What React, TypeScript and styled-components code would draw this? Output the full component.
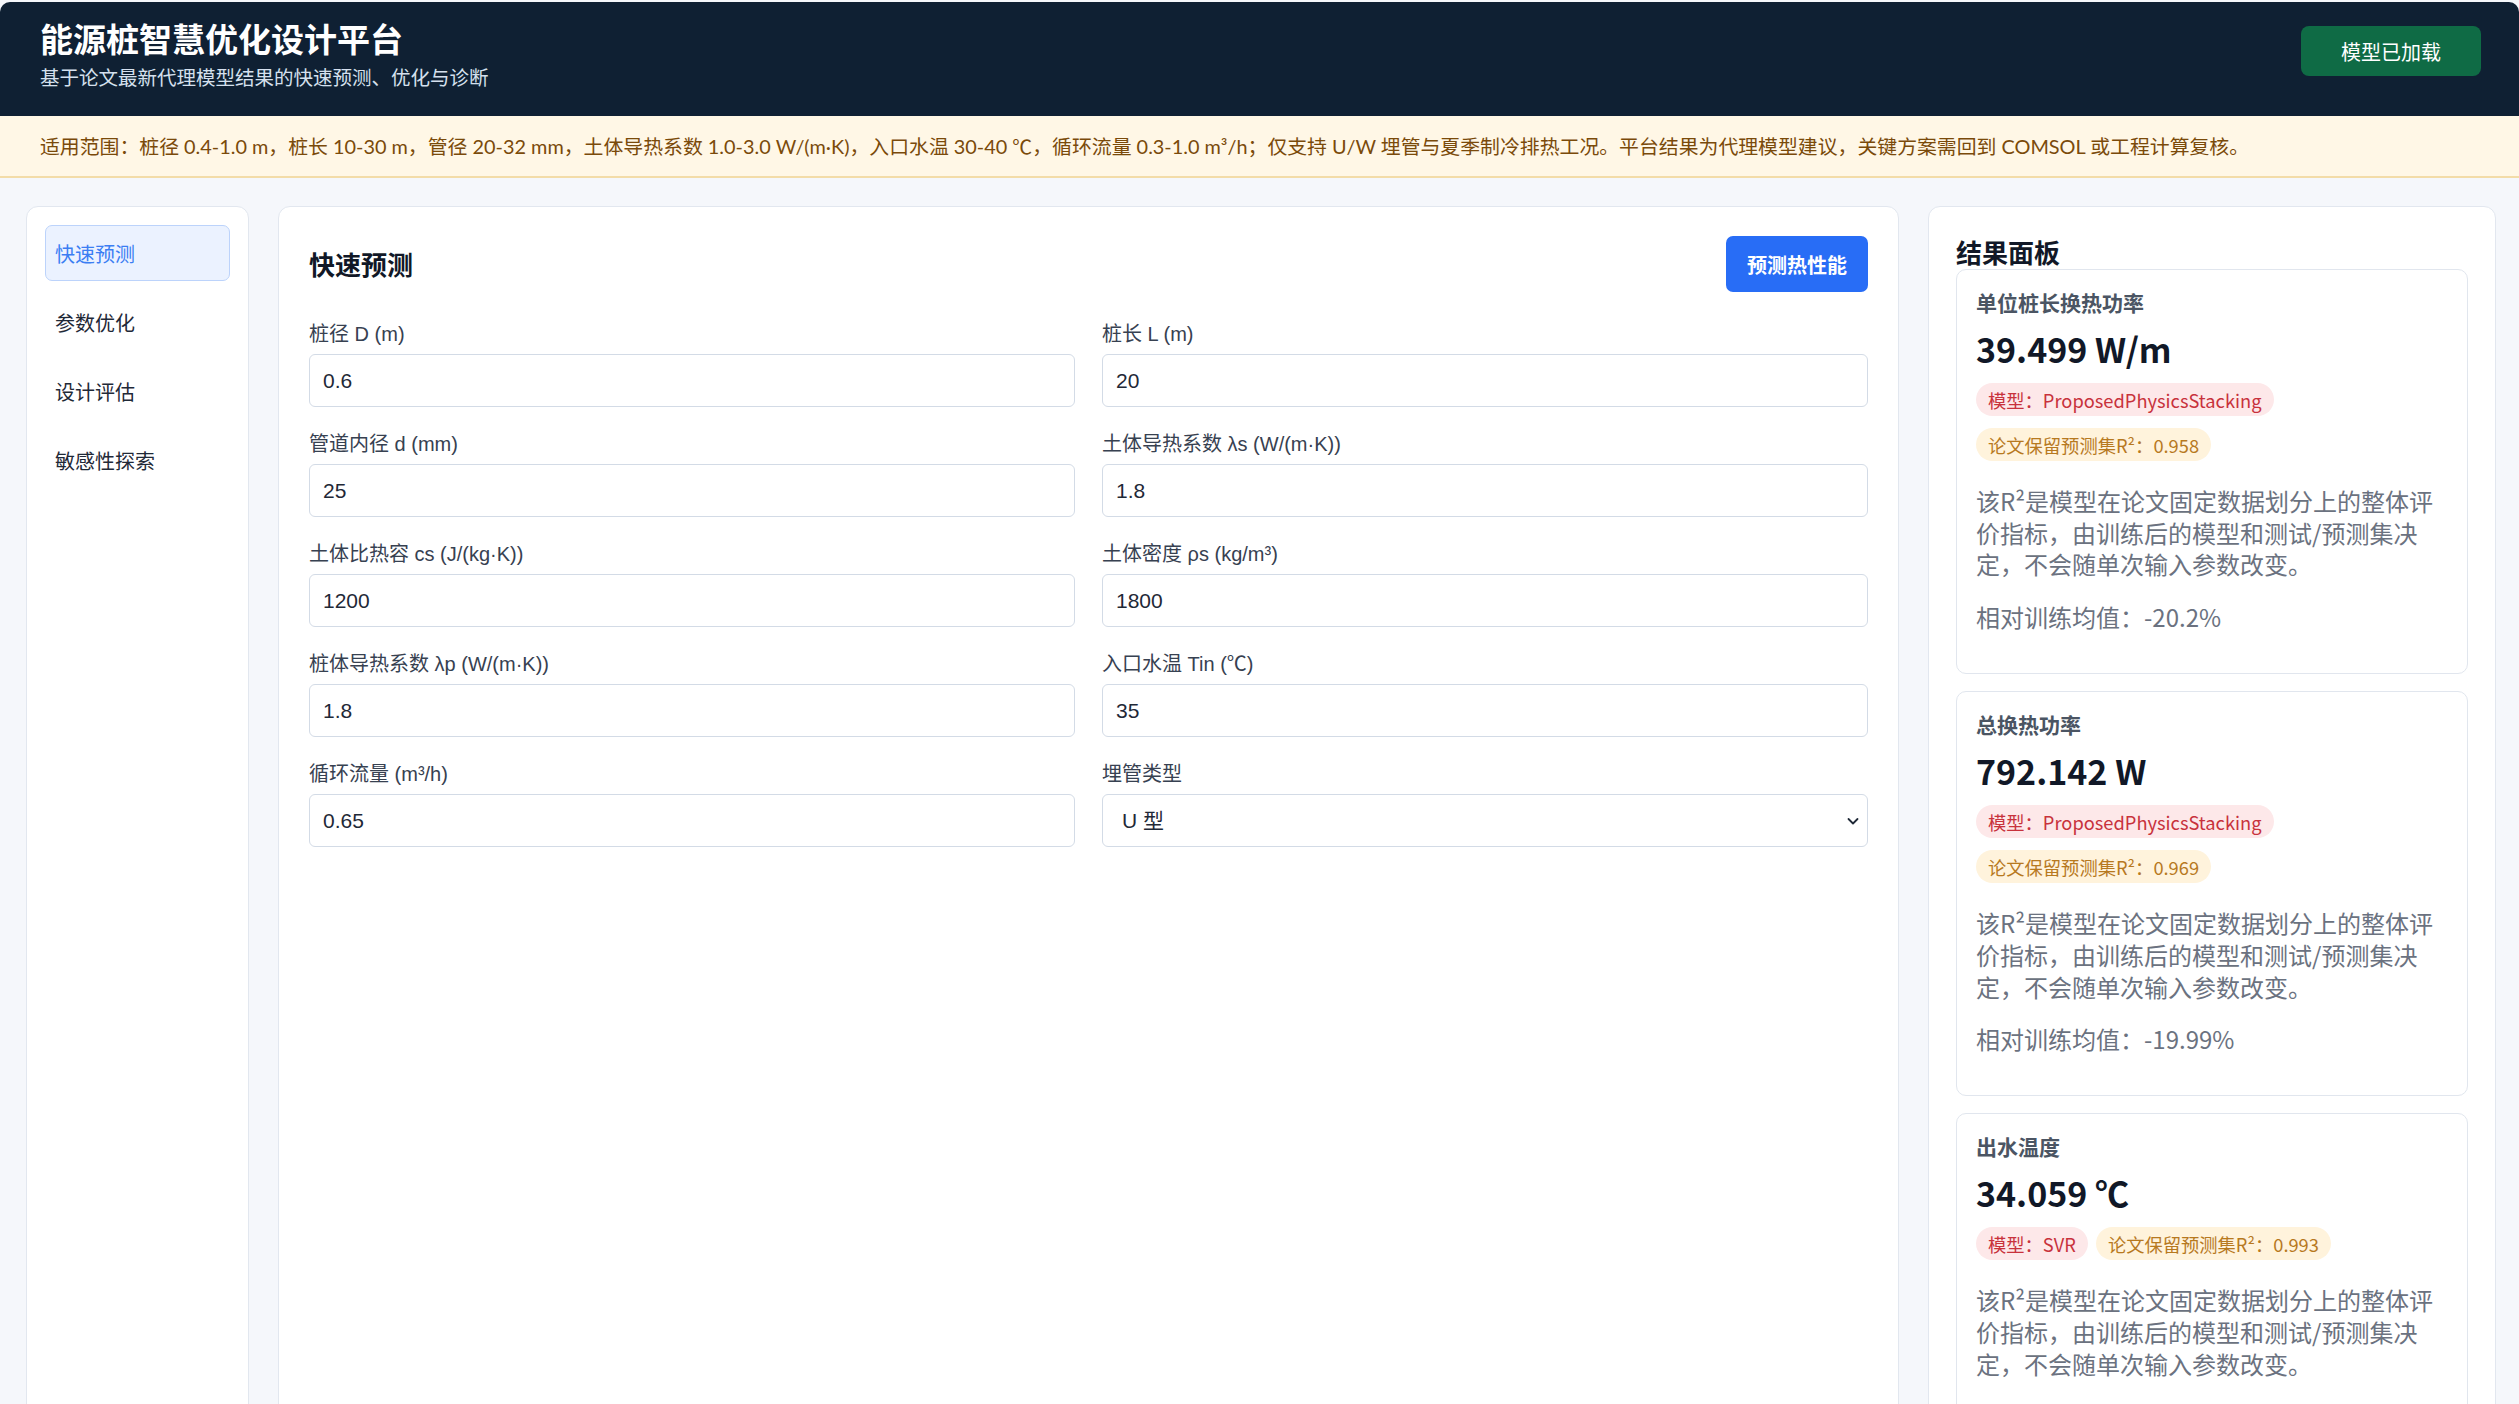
import React from "react";
import styled, { createGlobalStyle } from "styled-components";

const GlobalStyle = createGlobalStyle`
  * { box-sizing: border-box; }
  html, body { margin: 0; padding: 0; }
  body {
    background: #f5f7fb;
    font-family: "Noto Sans CJK SC", "Noto Sans", sans-serif;
    color: #1f2937;
  }
`;

const Header = styled.header`
  margin-top: 2px;
  background: #0f2033;
  border-radius: 10px 10px 0 0;
  height: 114px;
  padding: 16px 38px 0 40px;
  display: flex;
  justify-content: space-between;
  align-items: flex-start;
`;

const HeaderText = styled.div`
  display: flex;
  flex-direction: column;
`;

const Title = styled.h1`
  margin: 0;
  font-size: 33px;
  line-height: 40px;
  font-weight: 700;
  color: #ffffff;
  letter-spacing: 0;
`;

const Subtitle = styled.p`
  margin: 5px 0 0;
  font-size: 19.5px;
  line-height: 28px;
  color: #d5e0ee;
`;

const StatusButton = styled.button`
  margin-top: 8px;
  height: 50px;
  padding: 0 40px;
  border: none;
  border-radius: 8px;
  background: #0f6b45;
  color: #ffffff;
  font-family: inherit;
  font-size: 20px;
`;

const Notice = styled.div`
  background: #fff7e6;
  border-bottom: 2px solid #f3dca8;
  padding: 16px 40px;
  font-family: "Lato", "Noto Sans CJK SC", sans-serif;
  font-size: 19.88px;
  line-height: 28px;
  color: #7a4a0a;
  white-space: nowrap;
`;

const Layout = styled.main`
  display: grid;
  grid-template-columns: 223px minmax(0, 1fr) 568px;
  gap: 29px;
  padding: 28px 23px 0 26px;
  align-items: stretch;
`;

const Sidebar = styled.nav`
  background: #ffffff;
  border: 1px solid #e2e7ef;
  border-radius: 12px;
  padding: 18px;
  display: flex;
  flex-direction: column;
  gap: 13px;
`;

const NavItem = styled.div<{ $active?: boolean }>`
  height: 56px;
  display: flex;
  align-items: center;
  padding: 0 9px;
  border-radius: 7px;
  border: 1px solid ${(p) => (p.$active ? "#bcd3fb" : "transparent")};
  background: ${(p) => (p.$active ? "#ebf2ff" : "transparent")};
  color: ${(p) => (p.$active ? "#3b7ef3" : "#1f2937")};
  font-size: 20px;
`;

const Panel = styled.section`
  background: #ffffff;
  border: 1px solid #e2e7ef;
  border-radius: 12px;
  padding: 29px 30px 40px;
`;

const PanelHeader = styled.div`
  display: flex;
  justify-content: space-between;
  align-items: center;
`;

const PanelTitle = styled.h2`
  margin: 0;
  font-size: 26px;
  line-height: 36px;
  font-weight: 700;
  color: #111827;
`;

const PrimaryButton = styled.button`
  height: 56px;
  padding: 0 21px;
  border: none;
  border-radius: 7px;
  background: #286df6;
  color: #ffffff;
  font-family: inherit;
  font-size: 20px;
  font-weight: 700;
`;

const FieldGrid = styled.div`
  margin-top: 28px;
  display: grid;
  grid-template-columns: 1fr 1fr;
  column-gap: 27px;
  row-gap: 23px;
`;

const Field = styled.label`
  display: flex;
  flex-direction: column;
  gap: 6px;
`;

const FieldLabel = styled.span`
  font-family: "Liberation Sans", "Noto Sans CJK SC", sans-serif;
  font-size: 20px;
  line-height: 28px;
  color: #374151;
`;

const TextInput = styled.input`
  height: 53px;
  width: 100%;
  padding: 0 13px;
  border: 1px solid #d3dbe6;
  border-radius: 6px;
  background: #ffffff;
  font-family: "Liberation Sans", "Noto Sans CJK SC", sans-serif;
  font-size: 21px;
  color: #1f2937;
  outline: none;
`;

const SelectWrap = styled.div`
  position: relative;
`;

const Select = styled.select`
  appearance: none;
  -webkit-appearance: none;
  height: 53px;
  width: 100%;
  padding: 0 19px;
  border: 1px solid #d3dbe6;
  border-radius: 6px;
  background: #ffffff;
  font-family: "Liberation Sans", "Noto Sans CJK SC", sans-serif;
  font-size: 21px;
  color: #1f2937;
  outline: none;
`;

const Chevron = styled.svg`
  position: absolute;
  right: 8px;
  top: 50%;
  width: 14px;
  height: 14px;
  transform: translateY(-50%);
  pointer-events: none;
`;

const ResultsPanel = styled.aside`
  background: #ffffff;
  border: 1px solid #e2e7ef;
  border-radius: 12px;
  padding: 28px 27px 28px;
`;

const ResultsTitle = styled.h2`
  margin: 0;
  font-size: 26px;
  line-height: 34px;
  font-weight: 700;
  color: #111827;
`;

const CardList = styled.div`
  display: flex;
  flex-direction: column;
  gap: 17px;
`;

const ResultCard = styled.div`
  border: 1px solid #e1e6ee;
  border-radius: 10px;
  padding: 18px 19px 18px;
`;

const CardLabel = styled.div`
  font-size: 21px;
  line-height: 28px;
  font-weight: 700;
  color: #4b5563;
`;

const CardValue = styled.div`
  margin-top: 11px;
  font-size: 34px;
  line-height: 44px;
  font-weight: 700;
  color: #111827;
`;

const BadgeRow = styled.div`
  margin-top: 12px;
  display: flex;
  flex-wrap: wrap;
  gap: 12px 8px;
`;

const Badge = styled.span<{ $tone: "red" | "amber" }>`
  height: 33px;
  display: inline-flex;
  align-items: center;
  padding: 0 12px;
  border-radius: 999px;
  font-size: 18.3px;
  white-space: nowrap;
  background: ${(p) => (p.$tone === "red" ? "#fde8e9" : "#fff3dc")};
  color: ${(p) => (p.$tone === "red" ? "#c8323c" : "#b7791f")};
`;

const Description = styled.p`
  margin: 24px 0 0;
  font-size: 24px;
  line-height: 31.7px;
  color: #6b7280;
`;

const Meta = styled.p`
  margin: 21px 0 22px;
  font-size: 24px;
  line-height: 32px;
  color: #6b7280;
`;

const Spacer = styled.div`
  height: 22px;
`;

const navItems = ["快速预测", "参数优化", "设计评估", "敏感性探索"];

const fields: { label: string; value: string }[] = [
  { label: "桩径 D (m)", value: "0.6" },
  { label: "桩长 L (m)", value: "20" },
  { label: "管道内径 d (mm)", value: "25" },
  { label: "土体导热系数 λs (W/(m·K))", value: "1.8" },
  { label: "土体比热容 cs (J/(kg·K))", value: "1200" },
  { label: "土体密度 ρs (kg/m³)", value: "1800" },
  { label: "桩体导热系数 λp (W/(m·K))", value: "1.8" },
  { label: "入口水温 Tin (℃)", value: "35" },
  { label: "循环流量 (m³/h)", value: "0.65" },
];

type Result = {
  label: string;
  value: string;
  model: string;
  r2: string;
  meta?: string;
};

const results: Result[] = [
  {
    label: "单位桩长换热功率",
    value: "39.499 W/m",
    model: "ProposedPhysicsStacking",
    r2: "0.958",
    meta: "相对训练均值：-20.2%",
  },
  {
    label: "总换热功率",
    value: "792.142 W",
    model: "ProposedPhysicsStacking",
    r2: "0.969",
    meta: "相对训练均值：-19.99%",
  },
  {
    label: "出水温度",
    value: "34.059 ℃",
    model: "SVR",
    r2: "0.993",
  },
];

const DESC = "该R²是模型在论文固定数据划分上的整体评价指标，由训练后的模型和测试/预测集决定，不会随单次输入参数改变。";

export default function App() {
  return (
    <>
      <GlobalStyle />
      <Header>
        <HeaderText>
          <Title>能源桩智慧优化设计平台</Title>
          <Subtitle>基于论文最新代理模型结果的快速预测、优化与诊断</Subtitle>
        </HeaderText>
        <StatusButton>模型已加载</StatusButton>
      </Header>
      <Notice>
        适用范围：桩径 0.4-1.0 m，桩长 10-30 m，管径 20-32 mm，土体导热系数 1.0-3.0 W/(m·K)，入口水温 30-40 ℃，循环流量 0.3-1.0 m³/h；仅支持 U/W 埋管与夏季制冷排热工况。平台结果为代理模型建议，关键方案需回到 COMSOL 或工程计算复核。
      </Notice>
      <Layout>
        <Sidebar>
          {navItems.map((item, i) => (
            <NavItem key={item} $active={i === 0}>
              {item}
            </NavItem>
          ))}
        </Sidebar>
        <Panel>
          <PanelHeader>
            <PanelTitle>快速预测</PanelTitle>
            <PrimaryButton>预测热性能</PrimaryButton>
          </PanelHeader>
          <FieldGrid>
            {fields.map((f) => (
              <Field key={f.label}>
                <FieldLabel>{f.label}</FieldLabel>
                <TextInput defaultValue={f.value} />
              </Field>
            ))}
            <Field>
              <FieldLabel>埋管类型</FieldLabel>
              <SelectWrap>
                <Select defaultValue="U">
                  <option value="U">U 型</option>
                  <option value="W">W 型</option>
                </Select>
                <Chevron viewBox="0 0 14 14" fill="none">
                  <path d="M2.5 5l4.5 4.5L11.5 5" stroke="#1f2937" strokeWidth="1.8" strokeLinecap="round" strokeLinejoin="round" />
                </Chevron>
              </SelectWrap>
            </Field>
          </FieldGrid>
        </Panel>
        <ResultsPanel>
          <ResultsTitle>结果面板</ResultsTitle>
          <CardList>
            {results.map((r) => (
              <ResultCard key={r.label}>
                <CardLabel>{r.label}</CardLabel>
                <CardValue>{r.value}</CardValue>
                <BadgeRow>
                  <Badge $tone="red">模型：{r.model}</Badge>
                  <Badge $tone="amber">论文保留预测集R²：{r.r2}</Badge>
                </BadgeRow>
                <Description>{DESC}</Description>
                {r.meta ? <Meta>{r.meta}</Meta> : <Spacer />}
              </ResultCard>
            ))}
          </CardList>
        </ResultsPanel>
      </Layout>
    </>
  );
}
